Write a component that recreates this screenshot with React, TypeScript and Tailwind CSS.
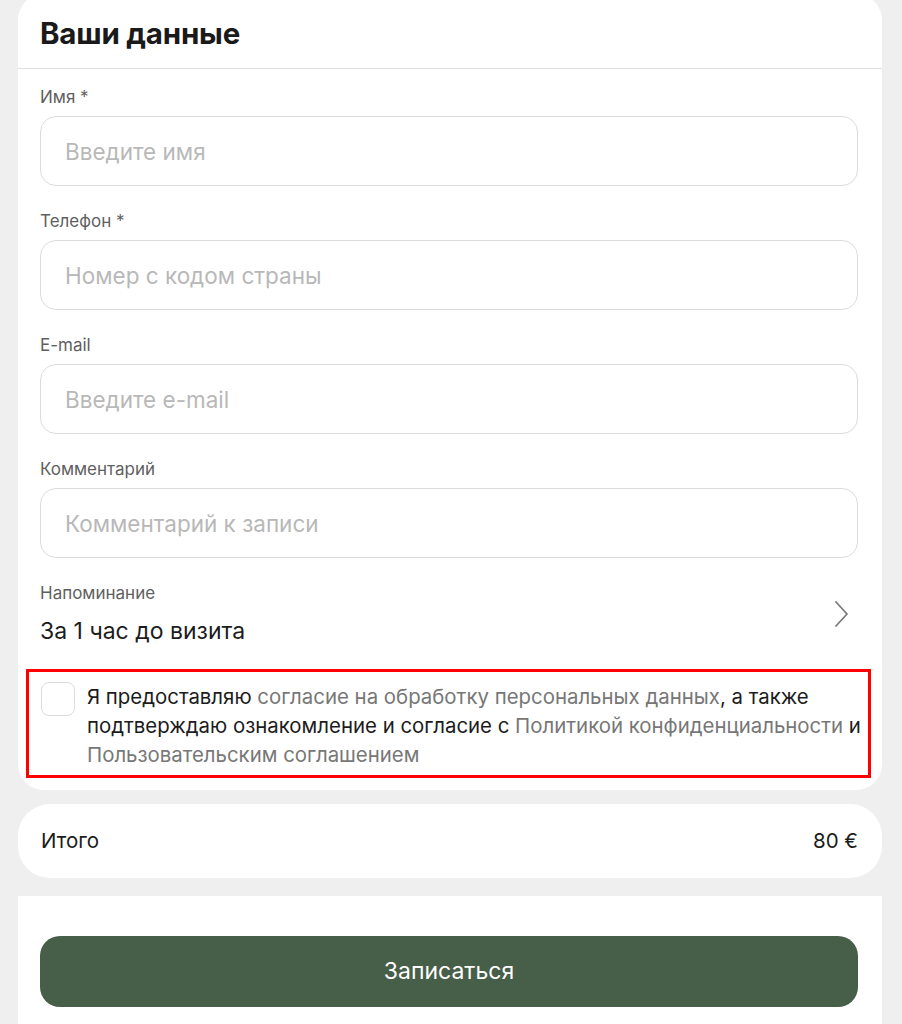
const fields = [
  { label: "Имя *", placeholder: "Введите имя" },
  { label: "Телефон *", placeholder: "Номер с кодом страны" },
  { label: "E-mail", placeholder: "Введите e-mail" },
  { label: "Комментарий", placeholder: "Комментарий к записи" },
];

const Field = ({ label, placeholder }: { label: string; placeholder: string }) => (
  <div className="flex flex-col">
    <label className="text-[17px] leading-[20px] text-[#5f5f5f]">{label}</label>
    <input
      placeholder={placeholder}
      className="mt-[9px] h-[70px] rounded-[16px] border border-[#dcdcdc] bg-white px-[24px] text-[22.5px] text-[#1c1c1c] outline-none placeholder:text-[#b8b8b8]"
    />
  </div>
);

const App = () => {
  return (
    <div
      className="min-h-[1024px] overflow-hidden bg-[#efefef]"
      style={{ fontFamily: "Inter, 'Noto Sans', sans-serif" }}
    >
      <section className="ml-[18px] mr-[20px] -mt-[6px] rounded-[26px] bg-white pb-[12px]">
        <header className="flex h-[75px] items-center border-b border-[#dedede] px-[22px] pt-[4px]">
          <h1 className="text-[29.5px] font-bold tracking-[-0.2px] text-[#1a1a1a]">Ваши данные</h1>
        </header>

        <div className="flex flex-col gap-[25px] pl-[22px] pr-[24px] pt-[18px]">
          {fields.map((f) => (
            <Field key={f.label} {...f} />
          ))}

          <button className="flex items-center justify-between text-left">
            <div className="flex flex-col">
              <span className="text-[17px] leading-[20px] text-[#5f5f5f]">Напоминание</span>
              <span className="mt-[14px] text-[23px] leading-[28px] text-[#1c1c1c]">За 1 час до визита</span>
            </div>
            <svg width="16" height="28" viewBox="0 0 16 28" className="mr-[8px]">
              <path d="M2 2 L13 14 L2 26" fill="none" stroke="#7a7a7a" strokeWidth="1.8" strokeLinecap="round" strokeLinejoin="round" />
            </svg>
          </button>
        </div>

        <div className="mt-[24px] ml-[8px] mr-[11px] flex gap-[12px] border-[3px] border-[#ff0000] pt-[10px] pr-[6px] pb-[6px] pl-[12px]">
          <span className="h-[34px] w-[34px] shrink-0 rounded-[8px] border border-[#dcdcdc] bg-white" />
          <p className="text-[20.4px] leading-[29px] text-[#1c1c1c]">
            Я предоставляю <span className="text-[#777777]">согласие на обработку персональных данных</span>, а также
            подтверждаю ознакомление и согласие с <span className="text-[#777777]">Политикой конфиденциальности</span> и{" "}
            <span className="text-[#777777]">Пользовательским соглашением</span>
          </p>
        </div>
      </section>

      <section className="ml-[18px] mr-[20px] mt-[14px] flex h-[74px] items-center justify-between rounded-[32px] bg-white pl-[23px] pr-[24px] text-[20.5px] text-[#1c1c1c]">
        <span>Итого</span>
        <span>80 €</span>
      </section>

      <section className="ml-[18px] mr-[20px] mt-[18px] bg-white pl-[22px] pr-[24px] pt-[40px] pb-[40px]">
        <button className="flex h-[71px] w-full items-center justify-center rounded-[20px] bg-[#475e49] text-[23px] text-white">
          Записаться
        </button>
      </section>
    </div>
  );
};

export default App;
